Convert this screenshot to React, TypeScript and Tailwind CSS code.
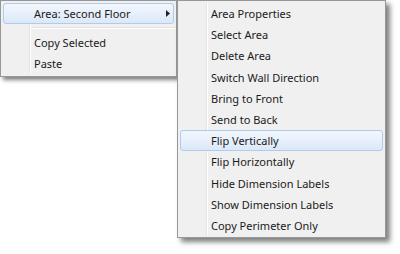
import React from "react";

const subItems = [
  "Area Properties",
  "Select Area",
  "Delete Area",
  "Switch Wall Direction",
  "Bring to Front",
  "Send to Back",
  "Flip Vertically",
  "Flip Horizontally",
  "Hide Dimension Labels",
  "Show Dimension Labels",
  "Copy Perimeter Only",
];

function Row({
  label,
  active,
  arrow,
}: {
  label: string;
  active?: boolean;
  arrow?: boolean;
}) {
  return (
    <div className="relative h-[21.2px] flex items-center">
      {active && (
        <div className="absolute inset-y-0 left-[2px] right-[2px] rounded-[3px] border border-[#aecbf0] bg-gradient-to-b from-[#f2f7fd] to-[#dce8f8]" />
      )}
      <span className="relative pl-[33px] text-[11px] leading-none text-[#1a1a1a]">
        {label}
      </span>
      {arrow && (
        <svg
          className="absolute right-[6px] top-[7px]"
          width="4"
          height="7"
          viewBox="0 0 4 7"
        >
          <path d="M0 0 L4 3.5 L0 7 Z" fill="#222" />
        </svg>
      )}
    </div>
  );
}

function Gutter() {
  return (
    <div className="absolute top-[2px] bottom-[2px] left-[28px] w-[2px] flex">
      <div className="w-px bg-[#e2e3e3]" />
      <div className="w-px bg-white" />
    </div>
  );
}

export default function App() {
  return (
    <div
      className="w-[400px] h-[254px] bg-white relative overflow-hidden"
      style={{ fontFamily: '"Segoe UI", "Noto Sans", "Open Sans", sans-serif' }}
    >
      <div className="flex items-start">
        <div className="relative w-[177px] h-[77px] bg-[#f0f0f0] border border-[#979797] shadow-[3px_3px_4px_rgba(0,0,0,0.5)] py-[2px]">
          <Gutter />
          <Row label="Area: Second Floor" active arrow />
          <div className="h-[8px] flex flex-col justify-center pl-[30px] pr-[1px]">
            <div className="h-px bg-[#e0e0e0]" />
            <div className="h-px bg-white" />
          </div>
          <Row label="Copy Selected" />
          <Row label="Paste" />
        </div>
        <div className="relative w-[209px] h-[238px] bg-[#f0f0f0] border border-[#979797] shadow-[4px_4px_5px_rgba(0,0,0,0.5)] pt-[2px]">
          <Gutter />
          {subItems.map((s) => (
            <Row key={s} label={s} active={s === "Flip Vertically"} />
          ))}
        </div>
      </div>
    </div>
  );
}
